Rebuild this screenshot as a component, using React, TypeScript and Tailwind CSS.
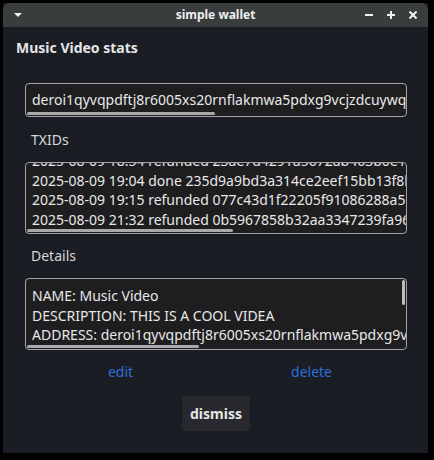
import React from "react";

const ADDRESS = "deroi1qyvqpdftj8r6005xs20rnflakmwa5pdxg9vcjzdcuywq2d7swj5a3eqsxvcgr4";

const txids = [
  "2025-08-09 18:54 refunded 23ae7d4291a5672ab463b0e1c7f9a2d4e5b6c8a9f0e1d2c3b4a59687f6e5d4c3",
  "2025-08-09 19:04 done 235d9a9bd3a314ce2eef15bb13f8b7c6a5d4e3f2a1b0c9d8e7f6a5b4c3d2e1f0",
  "2025-08-09 19:15 refunded 077c43d1f22205f91086288a51c4e7b2d9f3a6c8e0b1d5f7a9c2e4b6d8f0a1c3",
  "2025-08-09 21:32 refunded 0b5967858b32aa3347239fa96e1d4c7b0a3f6e9d2c5b8a1f4e7d0c3b6a9f2e5d",
];

const details = [
  "NAME: Music Video",
  "DESCRIPTION: THIS IS A COOL VIDEA",
  "ADDRESS: " + ADDRESS,
  "SCID: (4f1c0e2b9d8a7c6b5a4f3e2d1c0b9a8f7e6d5c4b3a2f1e0d9c8b7a6f5e4d3c2b1a0)",
];

const font = { fontFamily: '"Noto Sans", "Open Sans", sans-serif' };

function TitleBar() {
  return (
    <div className="relative flex h-[24px] items-center rounded-t-[7px] bg-[#393d3e] px-[10px]">
      <svg width="10" height="6" viewBox="0 0 10 6" className="mr-auto">
        <path d="M1 1 L9 1 L5 5 Z" fill="#f2f2f2" />
      </svg>
      <span className="absolute left-0 right-0 text-center text-[12px] font-bold text-[#eeeeee]">
        simple wallet
      </span>
      <div className="flex items-center gap-[14px] pr-[1px]">
        <svg width="8" height="8" viewBox="0 0 8 8">
          <path d="M0 4 H8" stroke="#f2f2f2" strokeWidth="2" />
        </svg>
        <svg width="8" height="8" viewBox="0 0 8 8">
          <path d="M0 4 H8 M4 0 V8" stroke="#f2f2f2" strokeWidth="2" />
        </svg>
        <svg width="8" height="8" viewBox="0 0 8 8">
          <path d="M0.5 0.5 L7.5 7.5 M7.5 0.5 L0.5 7.5" stroke="#f2f2f2" strokeWidth="2" />
        </svg>
      </div>
    </div>
  );
}

function HBar({ width }: { width: number }) {
  return (
    <div
      className="absolute bottom-[1px] left-[1px] h-[3px] rounded-full bg-[#a9a9a9]"
      style={{ width }}
    />
  );
}

export default function App() {
  return (
    <div className="h-[460px] w-[434px] bg-black pl-[3px] pt-[3px]" style={font}>
      <div className="flex h-[450px] w-[425px] flex-col bg-[#1a1d24]">
        <TitleBar />

        <div className="flex flex-col pl-[13px] pr-[21px]">
          <h1 className="mt-[11px] text-[14px] font-bold leading-[20px] text-[#e6e6e6]">
            Music Video stats
          </h1>

          <div className="ml-[9px] flex flex-col text-[14px] text-[#e8e8e8]">
            {/* address */}
            <div className="relative mt-[25px] h-[34px] overflow-hidden rounded-[4px] border border-[#a3a3a3] bg-[#1e1e20] px-[6px]">
              <div className="whitespace-nowrap leading-[32px]">{ADDRESS}</div>
              <HBar width={188} />
            </div>

            <div className="mt-[13px] pl-[6px] leading-[20px] text-[#d8d8d8]">TXIDs</div>

            {/* txids */}
            <div className="relative mt-[12px] h-[72px] overflow-hidden rounded-[4px] border border-[#a3a3a3] bg-[#1e1e20] px-[6px]">
              <div className="-mt-[12px] whitespace-nowrap leading-[19.5px]">
                {txids.map((t) => (
                  <div key={t}>{t}</div>
                ))}
              </div>
              <HBar width={206} />
            </div>

            <div className="mt-[12px] pl-[6px] leading-[20px] text-[#d8d8d8]">Details</div>

            {/* details */}
            <div className="relative mt-[12px] h-[72px] overflow-hidden rounded-[4px] border border-[#a3a3a3] bg-[#1e1e20] px-[6px]">
              <div className="mt-[7px] whitespace-nowrap leading-[19.5px]">
                {details.map((d) => (
                  <div key={d}>{d}</div>
                ))}
              </div>
              <div className="absolute right-[1px] top-[1px] h-[25px] w-[3px] rounded-full bg-[#bdbdbd]" />
              <HBar width={172} />
            </div>

            <div className="mt-[12px] grid grid-cols-2 text-center leading-[20px] text-[#2a6fdd]">
              <span>edit</span>
              <span>delete</span>
            </div>

            <div className="mt-[14px] flex justify-center">
              <button className="h-[35px] rounded-[4px] bg-[#28292e] px-[8px] text-[14px] font-bold text-[#e6e6e6]">
                dismiss
              </button>
            </div>
          </div>
        </div>
      </div>
    </div>
  );
}
